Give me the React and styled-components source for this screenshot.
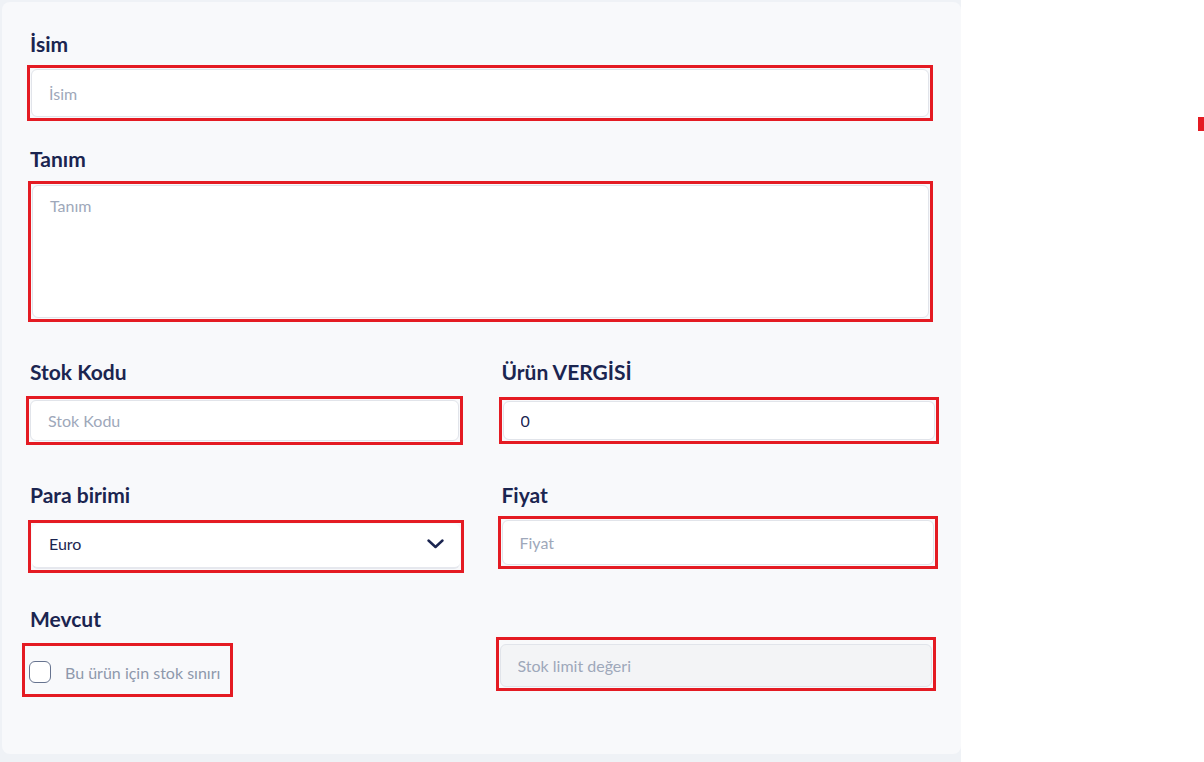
import React from 'react';
import styled, { createGlobalStyle } from 'styled-components';

const GlobalStyle = createGlobalStyle`
  html, body {
    margin: 0;
    padding: 0;
    background: #ffffff;
  }
  body {
    font-family: 'Lato', 'Liberation Sans', sans-serif;
  }
  * { box-sizing: border-box; }
`;

const red = '#e41b23';
const navy = '#1b2550';

const Page = styled.div`
  display: flex;
  width: 1204px;
  height: 762px;
  overflow: hidden;
`;

const Shell = styled.div`
  width: 961px;
  height: 762px;
  padding: 2px 0 0 2px;
  background: #eff2f6;
`;

const Card = styled.form`
  height: 752px;
  background: #f8f9fb;
  border-radius: 8px;
  padding: 30px 28px 0 28px;
  display: flex;
  flex-direction: column;
`;

const Side = styled.div`
  flex: 1;
  display: flex;
  justify-content: flex-end;
  align-items: flex-start;
  padding-top: 117px;
`;

const RedTick = styled.div`
  width: 6px;
  height: 14px;
  background: ${red};
`;

const Field = styled.div`
  display: flex;
  flex-direction: column;
  margin-top: ${p => p.$mt || 0}px;
`;

const Row = styled.div`
  display: grid;
  grid-template-columns: 1fr 1fr;
  column-gap: 40px;
  margin-top: ${p => p.$mt || 0}px;
`;

const Label = styled.label`
  font-size: 21px;
  line-height: 24px;
  font-weight: 700;
  color: ${navy};
  height: 24px;
`;

const Marked = styled.div`
  display: flex;
  align-items: stretch;
  border: 3px solid ${red};
  padding: ${p => p.$pt || 1}px 1px 1px 1px;
  height: ${p => p.$h}px;
  margin-top: ${p => p.$mt || 0}px;
  margin-left: ${p => p.$ml || 0}px;
  margin-right: ${p => p.$mr || 0}px;
  width: ${p => (p.$w ? `${p.$w}px` : 'auto')};
`;

const Input = styled.input`
  flex: 1;
  min-width: 0;
  border: 1px solid #e1e4ea;
  border-radius: 6px;
  background: ${p => (p.disabled ? '#f3f4f6' : '#ffffff')};
  padding: 0 17px;
  font-family: 'Lato', 'Liberation Sans', sans-serif;
  font-size: 16px;
  color: ${navy};
  outline: none;
  &::placeholder {
    color: #9ea8ba;
  }
`;

const TextArea = styled.textarea`
  flex: 1;
  resize: none;
  border: 1px solid #e1e4ea;
  border-radius: 6px;
  background: #ffffff;
  padding: 10px 17px;
  font-family: 'Lato', 'Liberation Sans', sans-serif;
  font-size: 16px;
  color: ${navy};
  outline: none;
  &::placeholder {
    color: #9ea8ba;
  }
`;

const Select = styled.div`
  flex: 1;
  display: flex;
  align-items: center;
  justify-content: space-between;
  background: #ffffff;
  border-radius: 6px;
  border-bottom: 2px solid #e6e8ee;
  padding: 0 16px 4px 17px;
  font-size: 16px;
  color: ${navy};
`;

const CheckRow = styled.label`
  flex: 1;
  display: flex;
  align-items: center;
  gap: 14px;
  padding-left: 3px;
  font-size: 16px;
  color: #8e98ab;
`;

const Box = styled.span`
  width: 22px;
  height: 22px;
  flex: none;
  border: 1.5px solid #66738f;
  border-radius: 6px;
  background: #ffffff;
`;

export default function App() {
  return (
    <Page>
      <GlobalStyle />
      <Shell>
        <Card onSubmit={e => e.preventDefault()}>
          <Field>
            <Label>İsim</Label>
            <Marked $h={56} $mt={9} $ml={-3}>
              <Input placeholder="İsim" />
            </Marked>
          </Field>

          <Field $mt={26}>
            <Label>Tanım</Label>
            <Marked $h={141} $mt={10} $ml={-2}>
              <TextArea placeholder="Tanım" />
            </Marked>
          </Field>

          <Row $mt={38}>
            <Field>
              <Label>Stok Kodu</Label>
              <Marked $h={49} $mt={12} $ml={-4} $mr={-1}>
                <Input placeholder="Stok Kodu" />
              </Marked>
            </Field>
            <Field>
              <Label>Ürün VERGİSİ</Label>
              <Marked $h={47} $mt={13} $ml={-3} $mr={-6}>
                <Input defaultValue="0" />
              </Marked>
            </Field>
          </Row>

          <Row $mt={38}>
            <Field>
              <Label>Para birimi</Label>
              <Marked $h={53} $mt={13} $ml={-2} $mr={-2}>
                <Select>
                  <span>Euro</span>
                  <svg width="17" height="10" viewBox="0 0 17 10" fill="none">
                    <path d="M1.5 1.5L8.5 8L15.5 1.5" stroke={navy} strokeWidth="2.4" strokeLinecap="round" strokeLinejoin="round" />
                  </svg>
                </Select>
              </Marked>
            </Field>
            <Field>
              <Label>Fiyat</Label>
              <Marked $h={53} $mt={9} $ml={-4} $mr={-5}>
                <Input placeholder="Fiyat" />
              </Marked>
            </Field>
          </Row>

          <Row $mt={34}>
            <Field>
              <Label>Mevcut</Label>
              <Marked $h={54} $mt={12} $ml={-8} $w={211} $pt={5}>
                <CheckRow>
                  <Box />
                  Bu ürün için stok sınırı
                </CheckRow>
              </Marked>
            </Field>
            <Field>
              <Marked $h={54} $mt={30} $ml={-6} $mr={-3} $pt={4}>
                <Input disabled placeholder="Stok limit değeri" />
              </Marked>
            </Field>
          </Row>
        </Card>
      </Shell>
      <Side>
        <RedTick />
      </Side>
    </Page>
  );
}
